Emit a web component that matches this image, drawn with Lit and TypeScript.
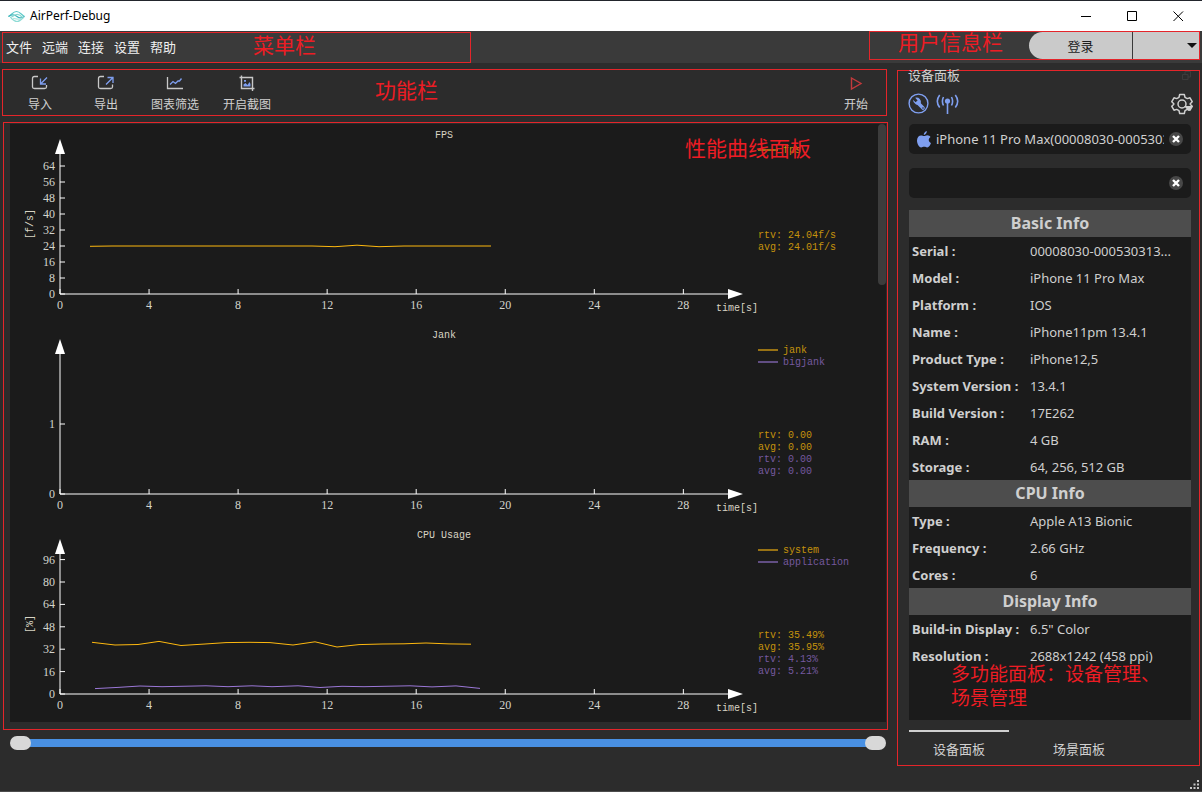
import { LitElement, html, svg, css } from "lit";
import { customElement, property } from "lit/decorators.js";

interface Series {
  name: string;
  color: string;
  textColor: string;
  points: [number, number][];
  stats: string[];
}

interface ChartData {
  title: string;
  unit: string;
  yTicks: { label: string; y: number }[];
  series: Series[];
}

const AMBER = "#ffb90f";
const AMBER_TEXT = "#c4920c";
const VIOLET = "#9b78d8";
const VIOLET_TEXT = "#75599f";

const steps = (step: number, count: number, px: number) =>
  Array.from({ length: count + 1 }, (_, i) => ({ label: String(i * step), y: 170 - i * px }));

const CHARTS: ChartData[] = [
  {
    title: "FPS",
    unit: "[f/s]",
    yTicks: steps(8, 8, 16),
    series: [
      {
        name: "fps",
        color: AMBER,
        textColor: AMBER_TEXT,
        points: [[80, 122.3], [102, 122], [302, 122], [325, 122.7], [347, 121.2], [369, 122.7], [394, 122], [481, 122]],
        stats: ["rtv: 24.04f/s", "avg: 24.01f/s"],
      },
    ],
  },
  {
    title: "Jank",
    unit: "",
    yTicks: [{ label: "0", y: 170 }, { label: "1", y: 100 }],
    series: [
      { name: "jank", color: AMBER, textColor: AMBER_TEXT, points: [], stats: ["rtv: 0.00", "avg: 0.00"] },
      { name: "bigjank", color: VIOLET, textColor: VIOLET_TEXT, points: [], stats: ["rtv: 0.00", "avg: 0.00"] },
    ],
  },
  {
    title: "CPU Usage",
    unit: "[%]",
    yTicks: steps(16, 6, 22.4),
    series: [
      {
        name: "system",
        color: AMBER,
        textColor: AMBER_TEXT,
        points: [
          [82, 118.3], [105, 121], [128, 120.5], [149, 117.4], [171, 121.5], [195, 120], [216, 118.6], [239, 118.3],
          [260, 118.6], [283, 121], [305, 117.8], [327, 123], [349, 120.6], [372, 120], [394, 119.8], [416, 119],
          [439, 119.9], [461, 120.2],
        ],
        stats: ["rtv: 35.49%", "avg: 35.95%"],
      },
      {
        name: "application",
        color: VIOLET,
        textColor: VIOLET_TEXT,
        points: [
          [85, 164.6], [108, 163.4], [130, 162], [152, 162.7], [196, 161.8], [218, 162.7], [242, 161.8], [262, 162.7],
          [288, 161.8], [310, 163.5], [332, 162.3], [354, 162.7], [400, 161.8], [422, 162.9], [446, 161.9], [470, 164.4],
        ],
        stats: ["rtv: 4.13%", "avg: 5.21%"],
      },
    ],
  },
];

const SECTIONS: { title: string; rows: [string, string][] }[] = [
  {
    title: "Basic Info",
    rows: [
      ["Serial :", "00008030-000530313..."],
      ["Model :", "iPhone 11 Pro Max"],
      ["Platform :", "IOS"],
      ["Name :", "iPhone11pm 13.4.1"],
      ["Product Type :", "iPhone12,5"],
      ["System Version :", "13.4.1"],
      ["Build Version :", "17E262"],
      ["RAM :", "4 GB"],
      ["Storage :", "64, 256, 512 GB"],
    ],
  },
  {
    title: "CPU Info",
    rows: [
      ["Type :", "Apple A13 Bionic"],
      ["Frequency :", "2.66 GHz"],
      ["Cores :", "6"],
    ],
  },
  {
    title: "Display Info",
    rows: [
      ["Build-in Display :", '6.5" Color'],
      ["Resolution :", "2688x1242 (458 ppi)"],
    ],
  },
];

@customElement("perf-chart")
export class PerfChart extends LitElement {
  @property({ attribute: false }) data!: ChartData;

  static styles = css`
    :host { display: block; }
    svg { display: block; width: 100%; height: auto; overflow: visible; }
    .label { font: 10px "Liberation Mono", monospace; fill: #d8d4c4; }
    .digits { font: 12px "Liberation Serif", serif; fill: #d4d4cc; }
    .mid { text-anchor: middle; }
    .end { text-anchor: end; }
    .axis { stroke: #fff; stroke-width: 1; fill: none; }
    .arrow { fill: #fff; }
    .curve { fill: none; stroke-width: 1; }
    .key { stroke-width: 2; opacity: 0.55; }
  `;

  render() {
    const d = this.data;
    const xs = [0, 4, 8, 12, 16, 20, 24, 28];
    let row = 0;
    return html`
      <svg viewBox="0 0 876 198" role="img" aria-label=${d.title}>
        <path class="axis" d="M50 30V170H718" />
        <path class="arrow" d="M50 15L55 30H45ZM733 170L718 165V175Z" />
        <text class="label mid" x="434" y="14">${d.title}</text>
        <text class="label" x="706" y="187">time[s]</text>
        <text class="label mid" transform="translate(23 100) rotate(-90)">${d.unit}</text>
        ${xs.map((x, i) => svg`
          <path class="axis" d="M${50 + i * 89.05} 165v5" />
          <text class="digits mid" x=${50 + i * 89.05} y="185">${x}</text>`)}
        ${d.yTicks.map((t) => svg`
          <path class="axis" d="M50 ${t.y}h5" />
          <text class="digits end" x="45" y=${t.y + 4}>${t.label}</text>`)}
        ${d.series.map((s, i) => svg`
          <polyline class="curve" stroke=${s.color} points=${s.points.map((p) => p.join(",")).join(" ")} />
          <line class="key" stroke=${s.color} x1="748" x2="768" y1=${26 + i * 12} y2=${26 + i * 12} />
          <text class="label" style="fill:${s.textColor}" x="773" y=${29 + i * 12}>${s.name}</text>
          ${s.stats.map((t) => svg`
            <text class="label" style="fill:${s.textColor}" x="748" y=${114 + 12 * row++}>${t}</text>`)}`)}
      </svg>`;
  }
}

@customElement("device-info")
export class DeviceInfo extends LitElement {
  static styles = css`
    :host { display: block; background: #1b1b1b; }
    table { width: 100%; border-collapse: collapse; table-layout: fixed; }
    .name-col { width: 118px; }
    tr { height: 27px; }
    th, td { padding: 0 3px; text-align: left; line-height: 20px; white-space: nowrap; color: #cfcfcf; }
    th { font-weight: 700; }
    .section { padding-bottom: 2px; background: #4d4d4d; text-align: center; font-size: 16px; }
  `;

  render() {
    return html`
      <table>
        <colgroup><col class="name-col" /><col /></colgroup>
        ${SECTIONS.map((s) => html`
          <tbody>
            <tr><th class="section" colspan="2">${s.title}</th></tr>
            ${s.rows.map(([k, v]) => html`<tr><th scope="row">${k}</th><td>${v}</td></tr>`)}
          </tbody>`)}
      </table>`;
  }
}

const icons = {
  logo: html`<svg width="17" height="13" viewBox="0 0 17 13" fill="none" stroke-width="1.2">
    <path stroke="#5cc8c8" d="M.5 6.5C4 4.5 5 1.500 8.500 1.500S13 4.500 16.500 6.500" />
    <path stroke="#3fb4bb" d="M.5 6.500C4 4 6.500 4.500 9 6.500S13.500 8.500 16.500 6.500" />
    <path stroke="#8ad8d0" d="M2 7.500C5 7 5.500 5 8.500 4.500S13 6 14.500 7.500" />
    <path stroke="#8edbd5" d="M3 8C5.500 10.500 7 11.500 9 11.500S13 10 15.500 7.500" />
    <path stroke="#b3e6e2" d="M5 8.500C7 8 10 10 12 9" />
  </svg>`,
  importIcon: html`<svg width="18" height="16" viewBox="0 0 18 16" fill="none" stroke-width="1.300">
    <path stroke="#c8c8c8" d="M7 1.500H3.500Q1.500 1.500 1.500 3.500V12Q1.500 13.500 3.500 13.500H13.500Q15.500 13.500 15.500 12V10" />
    <path stroke="#7f9ff0" d="M16 2.500L9.500 9M9.500 3.500V9H15" />
  </svg>`,
  exportIcon: html`<svg width="18" height="16" viewBox="0 0 18 16" fill="none" stroke-width="1.300">
    <path stroke="#c8c8c8" d="M7 1.500H3.500Q1.500 1.500 1.500 3.500V12Q1.500 13.500 3.500 13.500H13.500Q15.500 13.500 15.500 12V9.500" />
    <path stroke="#7f9ff0" d="M9 9.500L16 2.500M10.500 2.500H16V8" />
  </svg>`,
  chart: html`<svg width="18" height="16" viewBox="0 0 18 16" fill="none" stroke-width="1.300">
    <path stroke="#c8c8c8" d="M1.500 2V13.500H17" />
    <path stroke="#7f9ff0" d="M4 9.500L7 6.500L9.500 8.500L12 6L13.500 6L15.500 3.500" />
  </svg>`,
  crop: html`<svg width="18" height="16" viewBox="0 0 18 16" fill="none">
    <path stroke="#c8c8c8" stroke-width="1.400" d="M1.500 2.500H14.500V16M3.500 .5V13.500H16.500" />
    <path fill="#7f9ff0" d="M5.500 11.500V9.500L7.500 8L9.500 10L11.500 7L12.500 9V11.500ZM6 5h2v1.800H6z" />
  </svg>`,
  play: html`<svg width="18" height="16" viewBox="0 0 18 16" fill="none">
    <path stroke="#c23a3c" stroke-width="1.400" d="M4.500 3L14 8.500L4.500 14Z" />
  </svg>`,
  wrench: html`<svg width="22" height="22" viewBox="0 0 22 22" fill="none">
    <circle cx="10.500" cy="10.500" r="9.400" stroke="#7f9ff0" stroke-width="1.400" />
    <path stroke="#7f9ff0" stroke-width="3.600" stroke-linecap="round" d="M10 10L15 15" />
    <path fill="#7f9ff0" d="M5 6.800L7.600 9.300L9.600 7.400L7.200 4.700A4.600 4.600 0 0 1 12.800 10.600A4.800 4.800 0 0 1 5 6.800Z" />
    <circle cx="15" cy="15" r=".8" fill="#2c2c2c" />
  </svg>`,
  antenna: html`<svg width="24" height="22" viewBox="0 0 24 22" fill="none" stroke="#7f9ff0" stroke-width="1.600">
    <circle cx="11.500" cy="8" r="2.600" fill="#7f9ff0" stroke="none" />
    <path d="M11.500 9V21M7.500 4Q5.300 8.300 7.500 12.500M15.500 4Q17.700 8.300 15.500 12.500M3.700 2Q-1.100 8.300 3.700 14.500M19.300 2Q24.100 8.300 19.300 14.500" />
  </svg>`,
  gear: html`<svg width="22" height="22" viewBox="0 0 22 22" fill="none" stroke="#d0d0d0" stroke-width="1.500">
    <path stroke-linejoin="round" d="M8.700 1.500H13.300L14 4.300L16.300 5.600L19 4.800L21.200 8.700L19.200 10.700V11.300L21.200 13.300L19 17.200L16.300 16.400L14 17.700L13.300 20.500H8.700L8 17.700L5.700 16.400L3 17.200L.8 13.300L2.800 11.300V10.700L.8 8.700L3 4.800L5.700 5.600L8 4.300Z" />
    <circle cx="11" cy="11" r="4" />
    <path fill="#d0d0d0" stroke="none" d="M13 13H22L17.500 18Z" />
  </svg>`,
  apple: html`<svg width="14" height="17" viewBox="0 0 14 17" fill="#7f9ff0">
    <path d="M9.800 0C10 1.800 8.600 3.800 6.800 3.900C6.600 2.100 8.200 .3 9.800 0Z" />
    <path d="M7 5C8 5 8.800 4.200 10.200 4.200C11.700 4.300 12.900 5 13.500 6C11 7.500 11.300 10.900 14 12C13.300 14 11.900 16.400 10.200 16.400C9 16.400 8.600 15.700 7.200 15.700S5.300 16.400 4.200 16.400C1.900 16.400 0 12.500 0 9.600C0 6.300 2 4.400 4.100 4.400C5.300 4.400 6.200 5 7 5Z" />
  </svg>`,
  clear: html`<svg width="14" height="14" viewBox="0 0 14 14">
    <circle cx="7" cy="7" r="7" fill="#484848" />
    <path d="M4 4L10 10M10 4L4 10" stroke="#fff" stroke-width="2.400" />
  </svg>`,
};

@customElement("app-root")
export class AppRoot extends LitElement {
  static styles = css`
    :host {
      display: block;
      font: 13px/20px "Noto Sans", "Noto Sans CJK SC", sans-serif;
      color: #d0d0d0;
    }
    * { box-sizing: border-box; }
    svg { display: block; }
    button { font: inherit; color: inherit; background: none; border: 0; padding: 0; margin: 0; }
    .window {
      position: relative;
      display: flex;
      flex-direction: column;
      min-height: 100vh;
      background: #2c2c2c;
      border-bottom: 1px solid #4c4c4c;
    }
    .titlebar {
      display: flex;
      align-items: center;
      height: 31px;
      padding: 0 1px 0 8px;
      background: #fff;
      color: #000;
      border-top: 1px solid #22252c;
      font-size: 12px;
    }
    .app-name { flex: 1; margin: 0 0 0 5px; font-size: 12px; font-weight: 400; }
    .win-btn { width: 46px; height: 30px; display: grid; place-items: center; }
    .menubar {
      display: flex;
      justify-content: space-between;
      height: 32px;
      padding: 0 2px;
      background: #3a3a3a;
    }
    .box { position: relative; border: 1px solid #e4252a; }
    .note {
      position: absolute;
      color: #ed1c24;
      font: 400 21px/24px "Noto Sans CJK SC", sans-serif;
      white-space: nowrap;
      pointer-events: none;
      z-index: 2;
    }
    .menus { display: flex; align-items: center; gap: 10px; width: 469px; margin: 1px 0 0; padding: 0 3px 2px; height: 31px; }
    .menus button { color: #f0f0f0; }
    .note-menu { left: 250px; top: -1px; }
    .user { display: flex; width: 331px; height: 29px; justify-content: flex-end; }
    .note-user { left: 28px; top: -3px; }
    .login { width: 103px; background: #cacaca; color: #1c1c1c; border-radius: 14px 0 0 14px; }
    .account { width: 66px; margin-left: 1px; background: #cacaca; display: flex; align-items: center; justify-content: flex-end; padding-right: 2px; }
    .body { display: grid; grid-template-columns: minmax(0, 1fr) 303px; gap: 9px; align-items: start; padding: 6px 2px 0 2px; }
    .work { display: flex; flex-direction: column; gap: 6px; }
    .toolbar { display: flex; height: 47px; margin-right: 1px; padding: 0 6px 0 4px; }
    .tool {
      display: flex;
      flex-direction: column;
      align-items: center;
      gap: 6px;
      min-width: 66px;
      padding: 5px 12px 0;
      font-size: 12px;
      line-height: 16px;
    }
    .start { min-width: 48px; margin-left: auto; }
    .note-tools { left: 372px; top: 7px; }
    .curves { margin-left: 1px; padding: 1px 1px 7px 6px; }
    .note-curves { right: 76px; top: 12px; }
    .plots { position: relative; display: grid; gap: 2px; background: #1b1b1b; }
    .scroll { position: absolute; right: 0; top: 0; width: 8px; height: 27%; border-radius: 4px; background: #3c3c3c; }
    .range { display: grid; align-items: center; margin: 0 2px 0 8px; height: 14px; background: linear-gradient(#4990e2, #4990e2) center / calc(100% - 20px) 8px no-repeat; }
    .range input {
      grid-area: 1 / 1;
      appearance: none;
      width: 100%;
      height: 14px;
      margin: 0;
      background: none;
      pointer-events: none;
    }
    .range input::-webkit-slider-thumb {
      appearance: none;
      width: 21px;
      height: 14px;
      border-radius: 7px;
      background: #d8d8d8;
      pointer-events: auto;
    }
    .dock { margin-top: 1px; padding: 0 8px 0 11px; }
    .dock-head { display: flex; justify-content: space-between; align-items: center; margin-left: -1px; height: 8px; }
    .dock-title { margin: 0; font-size: 13px; font-weight: 400; line-height: 8px; }
    .actions { display: flex; gap: 6px; align-items: center; height: 22px; margin: 14px -2px 9px -1px; }
    .settings { margin-left: auto; }
    .device { display: flex; align-items: center; gap: 5px; height: 30px; margin-bottom: 14px; padding: 0 8px; border-radius: 5px; background: #1b1b1b; }
    .device input { flex: 1; min-width: 0; padding: 0; border: 0; outline: 0; background: none; color: #d0d0d0; font: inherit; }
    .second { margin-bottom: 12px; }
    .info { min-height: 510px; }
    .note-dock { left: 53px; top: 590px; font-size: 19px; }
    .tabs { display: flex; gap: 20px; margin-top: 10px; height: 35px; }
    .tab { width: 100px; border-top: 2px solid transparent; line-height: 20px; }
    .active { border-top-color: #d0d0d0; }
    .grip { position: absolute; right: 3px; bottom: 2px; }
  `;

  private tool(label: string, icon: unknown, cls = "") {
    return html`<button class="tool ${cls}">${icon}<span>${label}</span></button>`;
  }

  private device(value: string, icon: unknown, cls = "") {
    return html`
      <div class="device ${cls}">
        ${icon}
        <input type="text" readonly aria-label="设备" .value=${value} />
        <button aria-label="清除">${icons.clear}</button>
      </div>`;
  }

  render() {
    return html`
      <div class="window">
        <header class="titlebar">
          ${icons.logo}
          <h1 class="app-name">AirPerf-Debug</h1>
          <button class="win-btn" aria-label="最小化">
            <svg width="11" height="11" viewBox="0 0 11 11"><path d="M0 5.500H10" stroke="#000" /></svg>
          </button>
          <button class="win-btn" aria-label="最大化">
            <svg width="11" height="11" viewBox="0 0 11 11"><path d="M.5 .5H9.500V9.500H.5Z" fill="none" stroke="#000" /></svg>
          </button>
          <button class="win-btn" aria-label="关闭">
            <svg width="11" height="11" viewBox="0 0 11 11"><path d="M.5 .5L10 10M10 .5L.5 10" stroke="#000" /></svg>
          </button>
        </header>

        <div class="menubar">
          <nav class="menus box">
            ${["文件", "远端", "连接", "设置", "帮助"].map((m) => html`<button>${m}</button>`)}
            <span class="note note-menu">菜单栏</span>
          </nav>
          <div class="user box">
            <span class="note note-user">用户信息栏</span>
            <button class="login">登录</button>
            <button class="account" aria-label="账户">
              <svg width="10" height="5" viewBox="0 0 10 5"><path d="M0 0H10L5 5Z" fill="#111" /></svg>
            </button>
          </div>
        </div>

        <div class="body">
          <main class="work">
            <div class="toolbar box">
              ${this.tool("导入", icons.importIcon)}
              ${this.tool("导出", icons.exportIcon)}
              ${this.tool("图表筛选", icons.chart)}
              ${this.tool("开启截图", icons.crop)}
              ${this.tool("开始", icons.play, "start")}
              <span class="note note-tools">功能栏</span>
            </div>
            <section class="curves box">
              <div class="plots">
                ${CHARTS.map((c) => html`<perf-chart .data=${c}></perf-chart>`)}
                <div class="scroll"></div>
              </div>
              <span class="note note-curves">性能曲线面板</span>
            </section>
            <div class="range">
              <input type="range" min="0" max="100" value="0" aria-label="起点" />
              <input type="range" min="0" max="100" value="100" aria-label="终点" />
            </div>
          </main>

          <aside class="dock box">
            <div class="dock-head">
              <h2 class="dock-title">设备面板</h2>
              <svg width="9" height="9" viewBox="0 0 9 9" fill="none" stroke="#3c3c3c"><path d="M.5 3.500H6V8.500H.5ZM3 3V.5H8.500V6H6" /></svg>
            </div>
            <div class="actions">
              <button aria-label="工具">${icons.wrench}</button>
              <button aria-label="无线">${icons.antenna}</button>
              <button class="settings" aria-label="设置">${icons.gear}</button>
            </div>
            ${this.device("iPhone 11 Pro Max(00008030-000530313", icons.apple)}
            ${this.device("", "", "second")}
            <device-info class="info"></device-info>
            <div class="tabs">
              <button class="tab active">设备面板</button>
              <button class="tab">场景面板</button>
            </div>
            <span class="note note-dock">多功能面板：设备管理、<br />场景管理</span>
          </aside>
        </div>

        <svg class="grip" width="9" height="9" viewBox="0 0 9 9" fill="#c8c8c8">
          <path d="M7 0h2v2H7zM7 3.500h2v2H7zM3.500 3.500h2v2h-2zM7 7h2v2H7zM3.500 7h2v2h-2zM0 7h2v2H0z" />
        </svg>
      </div>`;
  }
}
